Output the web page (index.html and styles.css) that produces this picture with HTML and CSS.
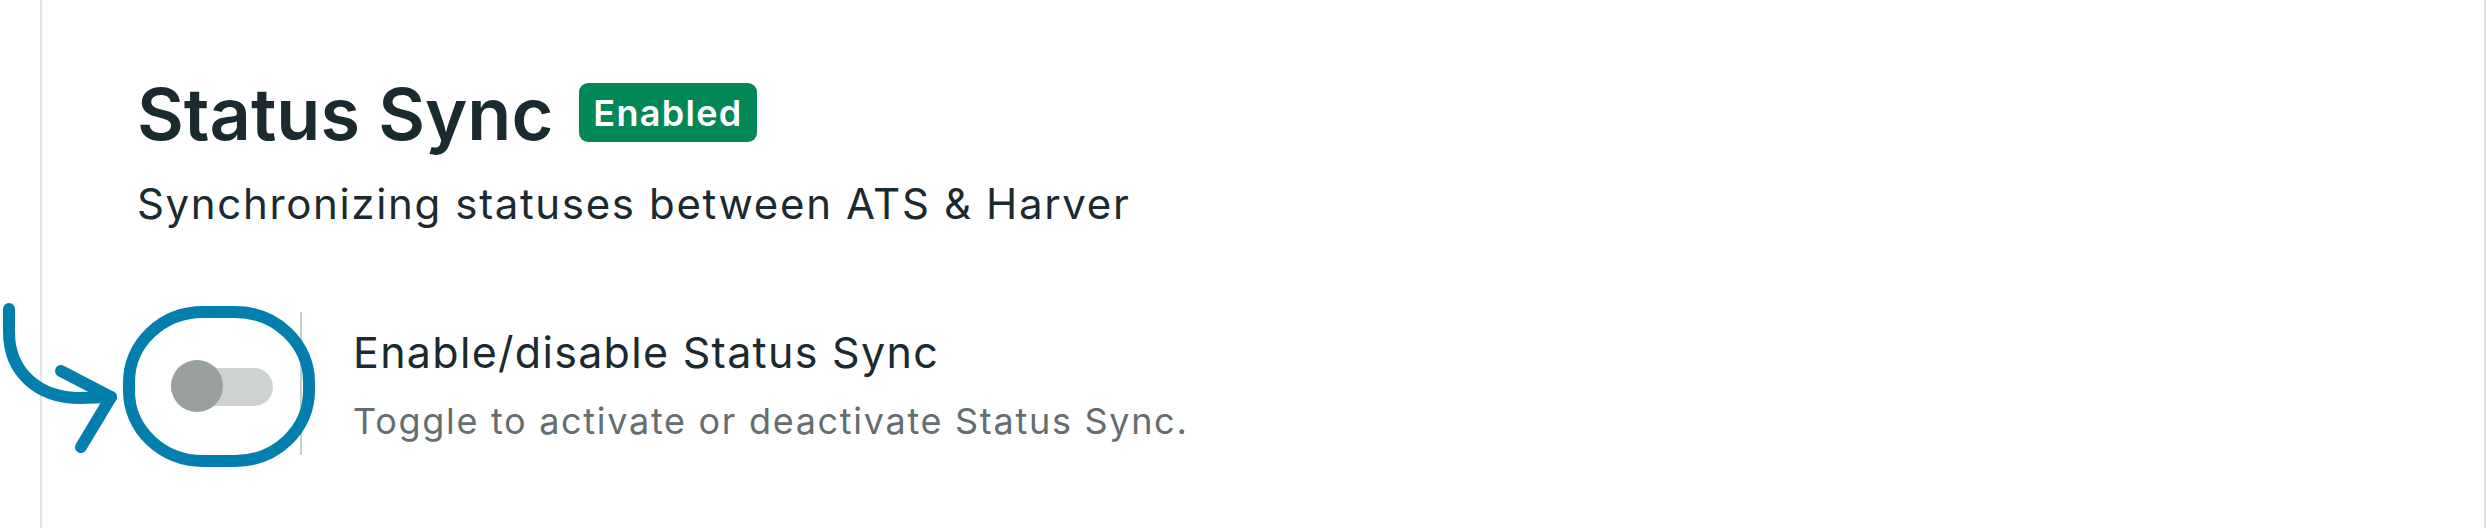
FILE: index.html
```html
<!DOCTYPE html>
<html lang="en">
<head>
<meta charset="utf-8">
<title>Status Sync</title>
<link rel="stylesheet" href="styles.css">
</head>
<body>
<main class="card">
  <header class="head">
    <div class="title-row">
      <h1 class="title">Status Sync</h1>
      <span class="badge">Enabled</span>
    </div>
    <p class="subtitle">Synchronizing statuses between ATS &amp; Harver</p>
  </header>
  <div class="setting">
    <div class="toggle-cell">
      <span class="switch"><span class="knob"></span></span>
    </div>
    <div class="setting-text">
      <div class="label">Enable/disable Status Sync</div>
      <div class="desc">Toggle to activate or deactivate Status Sync.</div>
    </div>
  </div>
</main>
<svg class="annotation" viewBox="0 290 340 200" width="340" height="200" aria-hidden="true">
  <rect x="129" y="312" width="180" height="149" rx="74" ry="70" fill="none" stroke="#037fae" stroke-width="12"/>
  <path d="M9 309 L9 332 C9 372 38 398 80 398 L111 397" fill="none" stroke="#037fae" stroke-width="12" stroke-linecap="round" stroke-linejoin="round"/>
  <path d="M61 371 L111 397 L81 447" fill="none" stroke="#037fae" stroke-width="12" stroke-linecap="round" stroke-linejoin="round"/>
</svg>
</body>
</html>
```
FILE: styles.css
```css
html, body {
  margin: 0;
  padding: 0;
  background: #ffffff;
}
body {
  font-family: Inter, "Noto Sans", "Liberation Sans", sans-serif;
  color: #1b2a2e;
  width: 2486px;
  height: 528px;
  overflow: hidden;
  position: relative;
}
.card {
  margin-left: 40px;
  height: 528px;
  box-sizing: border-box;
  border-left: 2px solid #e3e3e3;
  border-right: 2px solid #e3e3e3;
  padding: 71px 0 0 95px;
}
.title-row {
  display: flex;
  align-items: center;
  gap: 26px;
}
.title {
  margin: 0;
  font-size: 72px;
  line-height: 86px;
  font-weight: 600;
  letter-spacing: 0;
}
.badge {
  display: inline-flex;
  align-items: center;
  height: 59px;
  padding: 0 14px;
  box-sizing: border-box;
  border-radius: 9px;
  background: #038757;
  color: #ffffff;
  font-size: 36px;
  font-weight: 600;
  letter-spacing: 1.3px;
  margin-top: -3px;
}
.subtitle {
  margin: 22px 0 0;
  font-size: 42px;
  line-height: 50px;
  font-weight: 400;
  letter-spacing: 1.65px;
}
.setting {
  display: flex;
  margin-top: 83px;
}
.toggle-cell {
  width: 165px;
  height: 143px;
  box-sizing: border-box;
  border-right: 2px solid #cccccc;
  display: flex;
  align-items: center;
  padding-left: 34px;
  padding-top: 6px;
}
.switch {
  position: relative;
  display: block;
  width: 102px;
  height: 38px;
  border-radius: 19px;
  background: #cdd1d1;
}
.knob {
  position: absolute;
  left: 0;
  top: -8px;
  width: 52px;
  height: 52px;
  border-radius: 50%;
  background: #9aa0a0;
}
.setting-text {
  margin-left: 51px;
  padding-top: 14px;
}
.label {
  font-size: 43px;
  line-height: 52px;
  font-weight: 400;
  letter-spacing: 1.3px;
}
.desc {
  margin-top: 21px;
  font-size: 36px;
  line-height: 44px;
  color: #646e6e;
  letter-spacing: 1.7px;
}
.annotation {
  position: absolute;
  left: 0;
  top: 290px;
}
```
